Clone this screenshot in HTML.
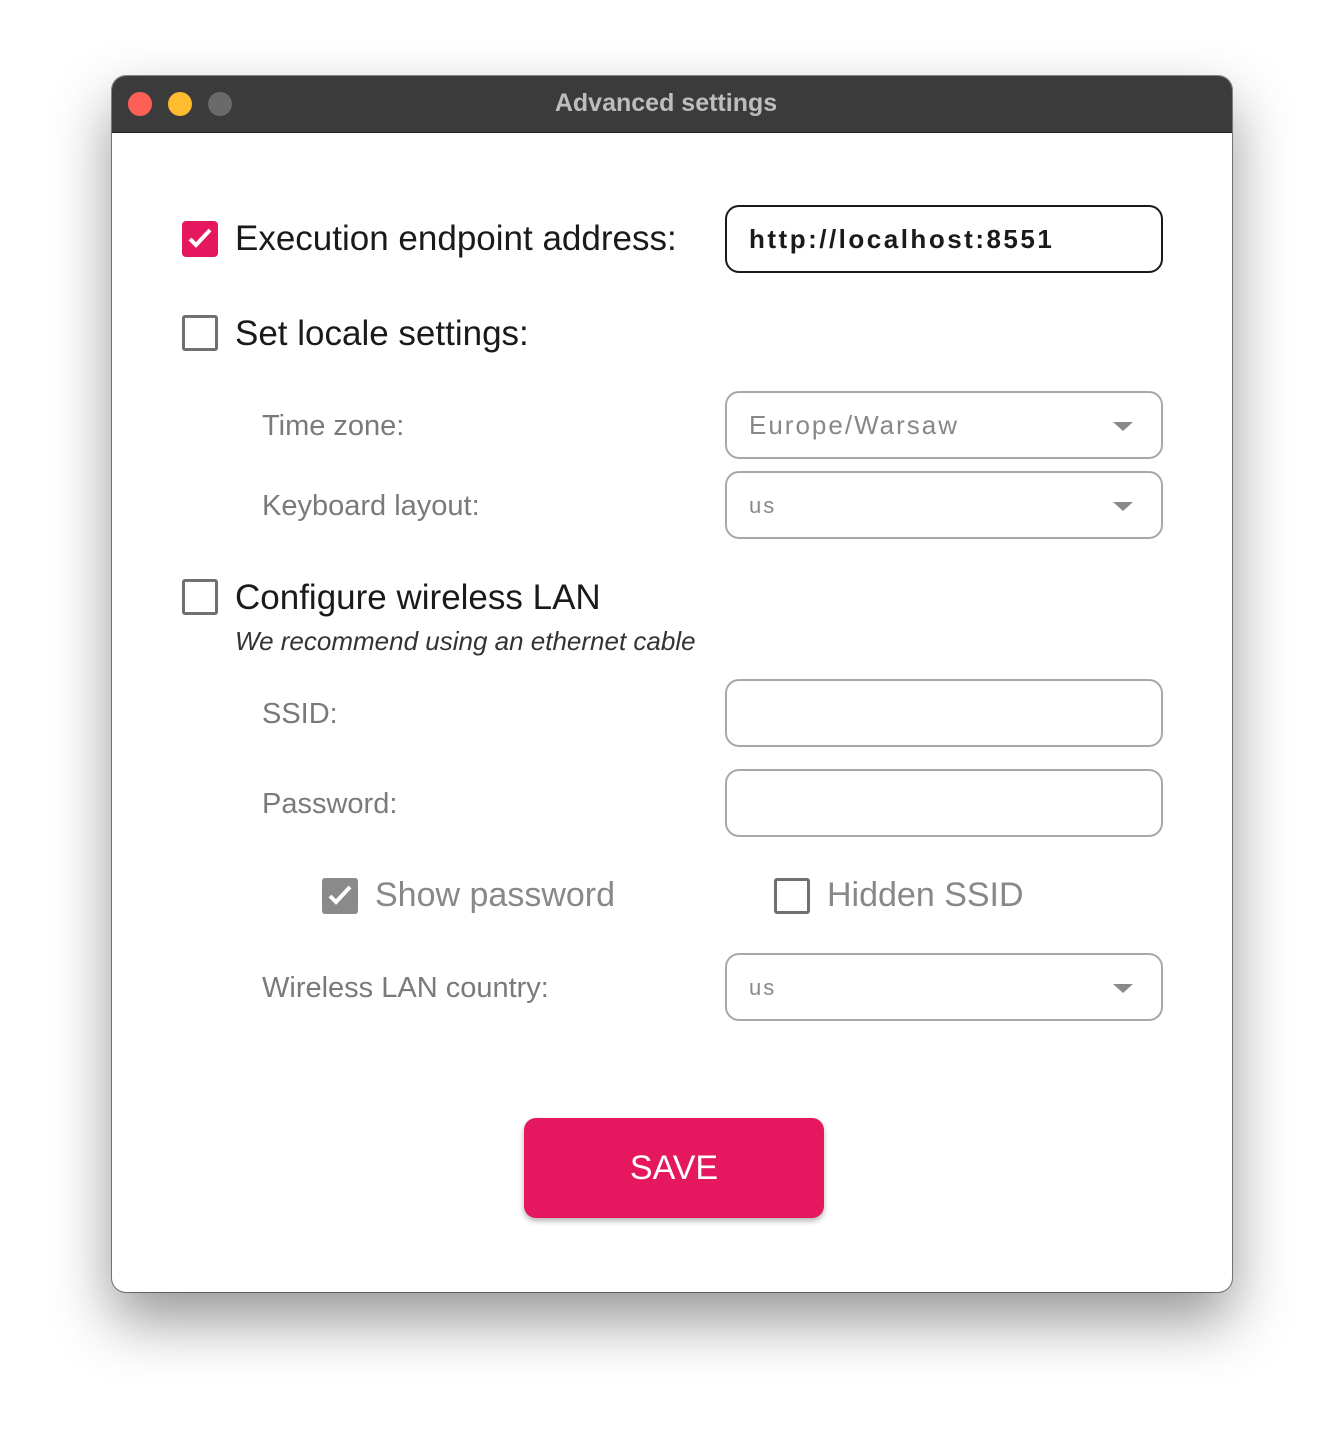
<!DOCTYPE html>
<html><head><style>
body{margin:0;width:1344px;height:1440px;background:#fff;font-family:"Liberation Sans",sans-serif;position:relative;overflow:hidden}
.win{position:absolute;left:112px;top:76px;width:1120px;height:1216px;border-radius:14px;background:#fff;box-shadow:0 28px 60px rgba(0,0,0,.42),0 0 0 1px rgba(0,0,0,.45);overflow:hidden}
.tb{position:absolute;left:0;top:0;width:100%;height:56px;background:#3b3b3b;border-bottom:1px solid #222}
.dot{position:absolute;top:16px;width:24px;height:24px;border-radius:50%}
.title{position:absolute;left:-6px;width:100%;top:13px;text-align:center;color:#bdbdbd;font-weight:bold;font-size:25px}
.a{position:absolute}
.lbl{font-size:35px;color:#1a1a1a}
.sub{font-size:29px;color:#7a7a7a}
.cb{position:absolute;width:36px;height:36px;border:3px solid #707070;border-radius:3px;box-sizing:border-box}
.cb.on{background:#e5175e;border:none;border-radius:4px}
.box{position:absolute;left:613px;width:438px;height:68px;border:2px solid #a8a8a8;border-radius:14px;box-sizing:border-box}
.box span{position:absolute;left:22px;top:17px;font-size:26px;color:#888;letter-spacing:2px}
.tri{position:absolute;right:28px;top:29px;width:0;height:0;border-left:10px solid transparent;border-right:10px solid transparent;border-top:9px solid #8a8a8a}
</style></head><body>
<div class="win">
<div class="tb">
<div class="dot" style="left:16px;background:#fe5f57"></div>
<div class="dot" style="left:56px;background:#febc2e"></div>
<div class="dot" style="left:96px;background:#6a6a6a"></div>
<div class="title">Advanced settings</div>
</div>
<div class="cb on" style="left:70px;top:145px"><svg width="36" height="36"><path d="M8 18l6 6 14-15" stroke="#fff" stroke-width="4" fill="none"/></svg></div>
<div class="a lbl" style="left:123px;top:143px">Execution endpoint address:</div>
<div class="box" style="top:129px;border-color:#1a1a1a"><span style="color:#1a1a1a;top:17px;letter-spacing:2.5px;font-weight:bold">http://localhost:8551</span></div>
<div class="cb" style="left:70px;top:239px"></div>
<div class="a lbl" style="left:123px;top:238px">Set locale settings:</div>
<div class="a sub" style="left:150px;top:334px">Time zone:</div>
<div class="box" style="top:315px"><span>Europe/Warsaw</span><div class="tri"></div></div>
<div class="a sub" style="left:150px;top:414px">Keyboard layout:</div>
<div class="box" style="top:395px"><span style="font-size:22px;top:20px">us</span><div class="tri"></div></div>
<div class="cb" style="left:70px;top:503px"></div>
<div class="a lbl" style="left:123px;top:502px">Configure wireless LAN</div>
<div class="a" style="left:123px;top:550px;font-size:26px;font-style:italic;color:#333">We recommend using an ethernet cable</div>
<div class="a sub" style="left:150px;top:622px">SSID:</div>
<div class="box" style="top:603px"></div>
<div class="a sub" style="left:150px;top:712px">Password:</div>
<div class="box" style="top:693px"></div>
<div class="cb on" style="left:210px;top:802px;background:#8a8a8a;border-radius:3px"><svg width="36" height="36"><path d="M8 18l6 6 14-15" stroke="#fff" stroke-width="4" fill="none"/></svg></div>
<div class="a" style="left:263px;top:800px;font-size:34px;color:#888">Show password</div>
<div class="cb" style="left:662px;top:802px"></div>
<div class="a" style="left:715px;top:800px;font-size:34px;color:#888">Hidden SSID</div>
<div class="a sub" style="left:150px;top:896px">Wireless LAN country:</div>
<div class="box" style="top:877px"><span style="font-size:22px;top:20px">us</span><div class="tri"></div></div>
<div class="a" style="left:412px;top:1042px;width:300px;height:100px;background:#e5175e;border-radius:12px;box-shadow:0 3px 6px rgba(0,0,0,.3);color:#fff;font-size:34px;text-align:center;line-height:100px">SAVE</div>
</div>
</body></html>
